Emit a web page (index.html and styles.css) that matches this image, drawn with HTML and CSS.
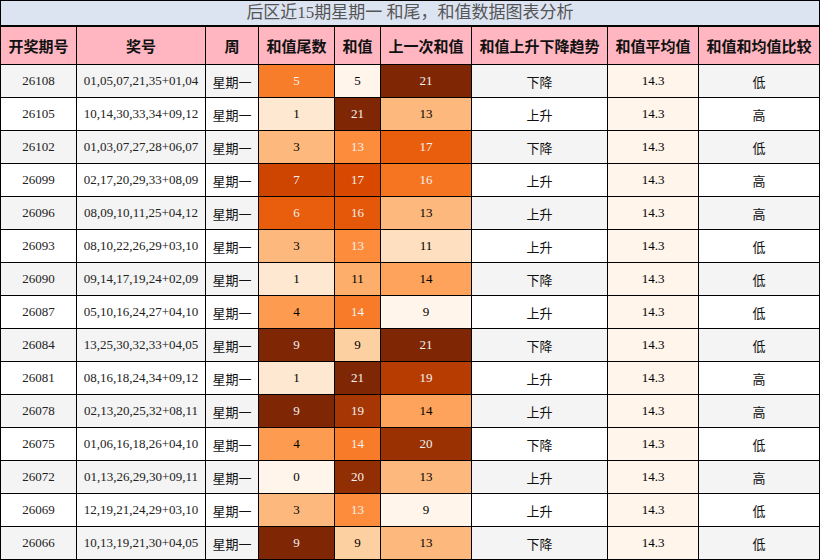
FILE: index.html
```html
<!DOCTYPE html>
<html lang="zh">
<head>
<meta charset="utf-8">
<title>后区近15期星期一 和尾，和值数据图表分析</title>
<link rel="stylesheet" href="styles.css">
</head>
<body>
<div class="board">
  <div class="title">后区近15期星期一 和尾，和值数据图表分析</div>
  <div class="grid">
    <div class="th">开奖期号</div><div class="th">奖号</div><div class="th">周</div><div class="th">和值尾数</div><div class="th">和值</div><div class="th">上一次和值</div><div class="th">和值上升下降趋势</div><div class="th">和值平均值</div><div class="th">和值和均值比较</div>

    <div class="td band">26108</div><div class="td band">01,05,07,21,35+01,04</div><div class="td band cjk">星期一</div><div class="td hm lt" style="background:#f87d2a">5</div><div class="td hm" style="background:#fff5eb">5</div><div class="td hm lt" style="background:#7f2704">21</div><div class="td band cjk">下降</div><div class="td avg">14.3</div><div class="td band cjk">低</div>

    <div class="td">26105</div><div class="td">10,14,30,33,34+09,12</div><div class="td cjk">星期一</div><div class="td hm" style="background:#fee8d1">1</div><div class="td hm lt" style="background:#7f2704">21</div><div class="td hm" style="background:#fdb97d">13</div><div class="td cjk">上升</div><div class="td avg">14.3</div><div class="td cjk">高</div>

    <div class="td band">26102</div><div class="td band">01,03,07,27,28+06,07</div><div class="td band cjk">星期一</div><div class="td hm" style="background:#fdb97d">3</div><div class="td hm lt" style="background:#fd8d3c">13</div><div class="td hm lt" style="background:#e95e0d">17</div><div class="td band cjk">下降</div><div class="td avg">14.3</div><div class="td band cjk">低</div>

    <div class="td">26099</div><div class="td">02,17,20,29,33+08,09</div><div class="td cjk">星期一</div><div class="td hm lt" style="background:#ce4401">7</div><div class="td hm lt" style="background:#d94801">17</div><div class="td hm lt" style="background:#f57521">16</div><div class="td cjk">上升</div><div class="td avg">14.3</div><div class="td cjk">高</div>

    <div class="td band">26096</div><div class="td band">08,09,10,11,25+04,12</div><div class="td band cjk">星期一</div><div class="td hm lt" style="background:#e95e0d">6</div><div class="td hm lt" style="background:#e5580a">16</div><div class="td hm" style="background:#fdb97d">13</div><div class="td band cjk">上升</div><div class="td avg">14.3</div><div class="td band cjk">高</div>

    <div class="td">26093</div><div class="td">08,10,22,26,29+03,10</div><div class="td cjk">星期一</div><div class="td hm" style="background:#fdb97d">3</div><div class="td hm lt" style="background:#fd8d3c">13</div><div class="td hm" style="background:#fedfbf">11</div><div class="td cjk">上升</div><div class="td avg">14.3</div><div class="td cjk">低</div>

    <div class="td band">26090</div><div class="td band">09,14,17,19,24+02,09</div><div class="td band cjk">星期一</div><div class="td hm" style="background:#fee8d1">1</div><div class="td hm" style="background:#fdae6b">11</div><div class="td hm" style="background:#fda35b">14</div><div class="td band cjk">下降</div><div class="td avg">14.3</div><div class="td band cjk">低</div>

    <div class="td">26087</div><div class="td">05,10,16,24,27+04,10</div><div class="td cjk">星期一</div><div class="td hm" style="background:#fd9c51">4</div><div class="td hm lt" style="background:#f77b28">14</div><div class="td hm" style="background:#fff5eb">9</div><div class="td cjk">上升</div><div class="td avg">14.3</div><div class="td cjk">低</div>

    <div class="td band">26084</div><div class="td band">13,25,30,32,33+04,05</div><div class="td band cjk">星期一</div><div class="td hm lt" style="background:#7f2704">9</div><div class="td hm" style="background:#fdd0a2">9</div><div class="td hm lt" style="background:#7f2704">21</div><div class="td band cjk">下降</div><div class="td avg">14.3</div><div class="td band cjk">低</div>

    <div class="td">26081</div><div class="td">08,16,18,24,34+09,12</div><div class="td cjk">星期一</div><div class="td hm" style="background:#fee8d1">1</div><div class="td hm lt" style="background:#7f2704">21</div><div class="td hm lt" style="background:#b73c02">19</div><div class="td cjk">上升</div><div class="td avg">14.3</div><div class="td cjk">高</div>

    <div class="td band">26078</div><div class="td band">02,13,20,25,32+08,11</div><div class="td band cjk">星期一</div><div class="td hm lt" style="background:#7f2704">9</div><div class="td hm lt" style="background:#a63603">19</div><div class="td hm" style="background:#fda35b">14</div><div class="td band cjk">上升</div><div class="td avg">14.3</div><div class="td band cjk">高</div>

    <div class="td">26075</div><div class="td">01,06,16,18,26+04,10</div><div class="td cjk">星期一</div><div class="td hm" style="background:#fd9c51">4</div><div class="td hm lt" style="background:#f77b28">14</div><div class="td hm lt" style="background:#993103">20</div><div class="td cjk">下降</div><div class="td avg">14.3</div><div class="td cjk">低</div>

    <div class="td band">26072</div><div class="td band">01,13,26,29,30+09,11</div><div class="td band cjk">星期一</div><div class="td hm" style="background:#fff5eb">0</div><div class="td hm lt" style="background:#922e04">20</div><div class="td hm" style="background:#fdb97d">13</div><div class="td band cjk">上升</div><div class="td avg">14.3</div><div class="td band cjk">高</div>

    <div class="td">26069</div><div class="td">12,19,21,24,29+03,10</div><div class="td cjk">星期一</div><div class="td hm" style="background:#fdb97d">3</div><div class="td hm lt" style="background:#fd8d3c">13</div><div class="td hm" style="background:#fff5eb">9</div><div class="td cjk">上升</div><div class="td avg">14.3</div><div class="td cjk">低</div>

    <div class="td band">26066</div><div class="td band">10,13,19,21,30+04,05</div><div class="td band cjk">星期一</div><div class="td hm lt" style="background:#7f2704">9</div><div class="td hm" style="background:#fdd0a2">9</div><div class="td hm" style="background:#fdb97d">13</div><div class="td band cjk">下降</div><div class="td avg">14.3</div><div class="td band cjk">低</div>
  </div>
</div>
</body>
</html>
```

FILE: styles.css
```css
html, body {
  margin: 0;
  padding: 0;
  background: #ffffff;
}

.board {
  width: 820px;
  font-family: "Liberation Serif", "Noto Sans CJK SC", serif;
}

.title {
  height: 24px;
  line-height: 24px;
  background: #dce3f1;
  border: 1px solid #000;
  border-bottom: 2px solid #000;
  text-align: center;
  color: #555;
  font-size: 17px;
  box-sizing: content-box;
  width: 818px;
}

.grid {
  display: grid;
  grid-template-columns: 75px 128px 52px 75px 45px 90px 135px 90px 120px;
  grid-template-rows: 37px repeat(15, 32px);
  gap: 1px;
  background: #000;
  padding: 0 1px 1px 1px;
}

.th {
  background: #ffb6c1;
  display: flex;
  align-items: center;
  justify-content: center;
  font-family: "Noto Sans CJK SC", sans-serif;
  font-weight: bold;
  font-size: 15px;
  color: #111;
  white-space: nowrap;
}

.td {
  background: #ffffff;
  display: flex;
  align-items: center;
  justify-content: center;
  font-size: 13px;
  color: #222;
  white-space: nowrap;
}

.td.band {
  background: #f4f4f4;
}

.td.cjk {
  font-family: "Noto Sans CJK SC", sans-serif;
  font-size: 13px;
  color: #111;
}

.td.hm {
  color: #000;
}

.td.hm.lt {
  color: #f1f1f1;
}

.td.avg {
  background: #fff5eb;
  color: #000;
}
```
